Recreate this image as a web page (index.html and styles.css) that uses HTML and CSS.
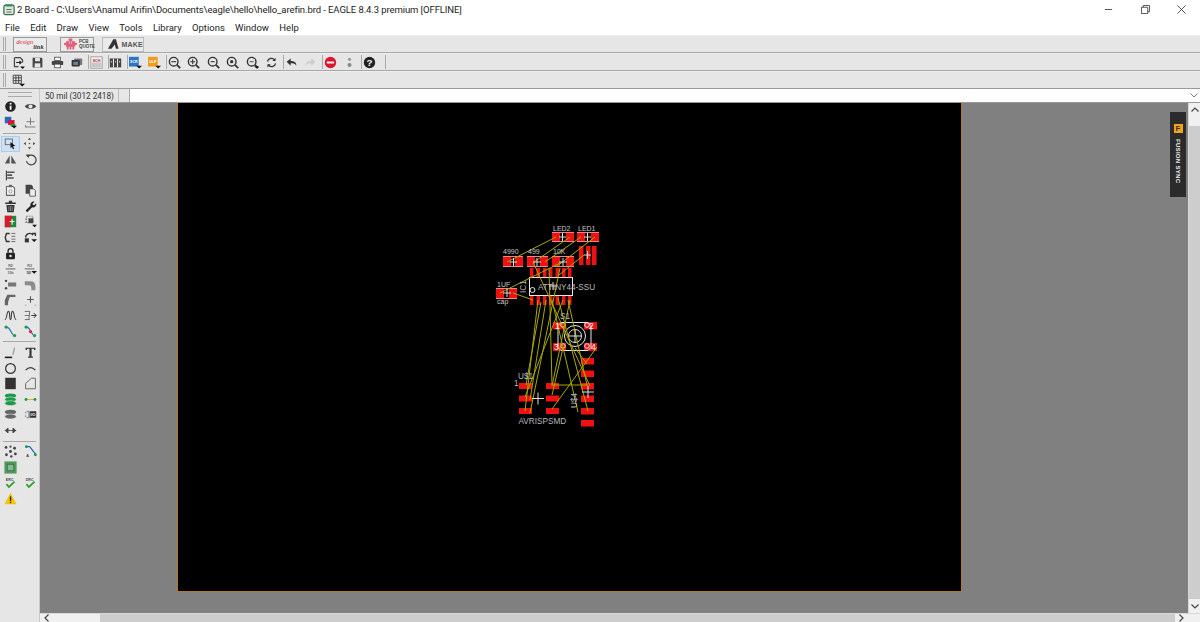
FILE: index.html
```html
<!DOCTYPE html>
<html lang="en">
<head>
<meta charset="utf-8">
<title>2 Board - EAGLE</title>
<link rel="stylesheet" href="styles.css">
</head>
<body>
<header class="titlebar">
  <svg class="app-icon" viewBox="0 0 14 14"><rect x="1" y="2" width="12" height="11" rx="2" fill="#d9e8d9" stroke="#3b6b4a" stroke-width="1.4"/><rect x="3" y="1" width="8" height="2.5" fill="#3b8a5a"/><path d="M4 7h6M4 10h6" stroke="#555" stroke-width="1"/></svg>
  <span class="title-text">2 Board - C:\Users\Anamul Arifin\Documents\eagle\hello\hello_arefin.brd - EAGLE 8.4.3 premium [OFFLINE]</span>
  <div class="win-controls">
    <svg class="win-btn" viewBox="0 0 10 10"><path d="M1 5h8" stroke="#444"/></svg>
    <svg class="win-btn" viewBox="0 0 10 10"><path d="M.5 2.5h7v7h-7zM2.5 2.5v-2h7v7h-2" fill="none" stroke="#444"/></svg>
    <svg class="win-btn" viewBox="0 0 10 10"><path d="M.5.5l9 9M9.5.5l-9 9" stroke="#444"/></svg>
  </div>
</header>
<nav class="menubar">
  <span>File</span><span>Edit</span><span>Draw</span><span>View</span><span>Tools</span><span>Library</span><span>Options</span><span>Window</span><span>Help</span>
</nav>
<div class="toolbar">
  <i class="grip"></i>
  <div class="web-btn btn-design"><span class="design-a">design</span><span class="design-b">link</span></div>
  <div class="web-btn btn-pcb">
    <svg class="pcb-logo" viewBox="0 0 14 12"><path d="M5 0h4v3h3v2h2v2h-2v2h-1v3H9V9H8v3H6V9H5v3H3V9H2V7H0V5h2V3h3z" fill="#e0607e"/><path d="M6 3v3M8 3v3" stroke="#f4c8d4" stroke-width=".8"/></svg>
    <span class="pcb-text">PCB<br>QUOTE</span>
  </div>
  <div class="web-btn btn-make">
    <svg class="make-logo" viewBox="0 0 12 11"><path d="M0 11L6 0h3l3 11H9L7.700 6 4 11z" fill="#333"/></svg>
    <span>MAKE</span>
  </div>
</div>
<div class="toolbar tb-icons">
  <i class="grip"></i>
  <svg class="ic s-a" viewBox="0 0 16 16"><path d="M3 2h7l3 3v3M3 2v11h5" fill="none" stroke="#444" stroke-width="1.500"/><path d="M5 8h6M9 6l2.500 2L9 10" fill="none" stroke="#222" stroke-width="1.300"/><path d="M10 13h6l-3 3z" fill="#111"/></svg>
  <svg class="ic" viewBox="0 0 16 16"><path d="M2 2h11l1 1v11H2z" fill="#444"/><rect x="5" y="2.500" width="6" height="4" fill="#e6e6e6"/><rect x="4.500" y="9" width="7" height="5" fill="#e6e6e6"/></svg>
  <svg class="ic" viewBox="0 0 16 16"><rect x="4.500" y="1.500" width="7" height="4" fill="#fff" stroke="#444"/><rect x="1" y="6" width="14" height="5" rx="1" fill="#444"/><rect x="4.500" y="10" width="7" height="4.500" fill="#fff" stroke="#444"/></svg>
  <svg class="ic" viewBox="0 0 16 16"><rect x="5" y="3" width="10" height="8" rx="1" fill="#777"/><rect x="2" y="5" width="10" height="8" rx="1" fill="#333"/><rect x="4" y="7" width="6" height="4" fill="#6a7f99"/></svg>
  <i class="tb-sep"></i>
  <svg class="ic" viewBox="0 0 16 16"><rect x="1" y="1" width="14" height="14" fill="#eee" stroke="#999"/><text x="8" y="7" class="ic-txt" fill="#c0202a">SCH</text><rect x="2" y="8" width="12" height="6" fill="#c8c8c8"/></svg>
  <i class="tb-sep"></i>
  <svg class="ic" viewBox="0 0 16 16"><rect x="1" y="3" width="14" height="11" fill="#444"/><path d="M5.500 3v11M10.500 3v11" stroke="#e6e6e6" stroke-width="1.300"/><path d="M3 6v2M8 6v2M13 6v2" stroke="#ddd"/></svg>
  <i class="tb-sep"></i>
  <svg class="ic" viewBox="0 0 16 16"><rect x="0" y="1" width="12" height="12" fill="#2a75c4"/><text x="6" y="9" class="ic-txt" fill="#fff">SCR</text><path d="M9 12h7l-3.500 3.500z" fill="#111"/></svg>
  <svg class="ic" viewBox="0 0 16 16"><rect x="0" y="1" width="12" height="12" fill="#f29c1f"/><text x="6" y="9" class="ic-txt" fill="#fff">ULP</text><path d="M9 12h7l-3.500 3.500z" fill="#111"/></svg>
  <i class="tb-sep"></i>
  <svg class="ic" viewBox="0 0 16 16"><use href="#zoom"/><path d="M4 7h6" stroke="#333" stroke-width="1.300"/></svg>
  <svg class="ic" viewBox="0 0 16 16"><use href="#zoom"/><path d="M4 7h6M7 4v6" stroke="#333" stroke-width="1.300"/></svg>
  <svg class="ic" viewBox="0 0 16 16"><use href="#zoom"/><path d="M4.500 7h5" stroke="#333" stroke-width="1.300"/></svg>
  <svg class="ic" viewBox="0 0 16 16"><use href="#zoom"/><circle cx="7" cy="7" r="2" fill="#333"/></svg>
  <svg class="ic" viewBox="0 0 16 16"><use href="#zoom"/><path d="M4.500 7h5" stroke="#333"/><path d="M10 12.500h6L13 15.500z" fill="#111"/></svg>
  <svg class="ic" viewBox="0 0 16 16"><path d="M3 7a5 5 0 0 1 9-2M13 9a5 5 0 0 1-9 2" fill="none" stroke="#333" stroke-width="1.500"/><path d="M13 2v4H9zM3 14v-4h4z" fill="#333"/></svg>
  <i class="tb-sep"></i>
  <svg class="ic" viewBox="0 0 16 16"><path d="M2 7l5-4v3c4 0 7 1 7 6-2-3-4-3-7-3v3z" fill="#333"/></svg>
  <svg class="ic" viewBox="0 0 16 16"><path d="M14 7L9 3v3C5 6 2 7 2 12c2-3 4-3 7-3v3z" fill="#ccc"/></svg>
  <i class="tb-sep"></i>
  <svg class="ic" viewBox="0 0 16 16"><circle cx="8" cy="8" r="7" fill="#e0132e"/><rect x="3.500" y="6.800" width="9" height="2.400" fill="#fff"/></svg>
  <svg class="ic" viewBox="0 0 16 16"><circle cx="8" cy="4" r="2" fill="#999"/><circle cx="8" cy="11" r="2.500" fill="#888"/></svg>
  <i class="tb-sep"></i>
  <svg class="ic" viewBox="0 0 16 16"><circle cx="8" cy="8" r="7" fill="#222"/><text x="8" y="12" class="ic-q" fill="#fff">?</text></svg>
  <i class="tb-sep end"></i>
</div>
<div class="toolbar tb-icons tb-last">
  <i class="grip"></i>
  <svg class="ic s-a" viewBox="0 0 16 16"><path d="M1.500 1.500h10v10h-10zM1.500 4.800h10M1.500 8.200h10M4.800 1.500v10M8.200 1.500v10" fill="none" stroke="#333"/><path d="M9 12h7l-3.500 3.500z" fill="#111"/></svg>
</div>
<div class="workspace">
  <aside class="tools">
    <i class="tools-grip"></i>
    <div class="tool-row"><svg class="tl" viewBox="0 0 16 16"><circle cx="8" cy="8" r="6.500" fill="#222"/><rect x="7" y="7" width="2.200" height="5" fill="#fff"/><rect x="7" y="3.600" width="2.200" height="2" fill="#fff"/></svg><svg class="tl" viewBox="0 0 16 16"><path d="M1 8c3-4 11-4 14 0-3 4-11 4-14 0z" fill="#444"/><circle cx="8" cy="8" r="2.500" fill="#e6e6e6"/></svg></div>
    <div class="tool-row"><svg class="tl" viewBox="0 0 16 16"><rect x="1" y="1" width="8" height="8" fill="#2a68c0"/><rect x="5" y="5" width="8" height="6" fill="#d9143a"/><rect x="8" y="10" width="6" height="3" fill="#1c9a4a"/><path d="M9 12h7l-3.500 3.500z" fill="#111"/></svg><svg class="tl" viewBox="0 0 16 16"><path d="M8 2v9M3 7h10M2 13.500h12" stroke="#666" fill="none"/><path d="M2 11v3" stroke="#666"/></svg></div>
    <i class="tools-sep"></i>
    <div class="tool-row"><div class="tool-active"><svg class="tl" viewBox="0 0 16 16"><rect x="1.500" y="2.500" width="9" height="7" fill="none" stroke="#555"/><path d="M8 6l6 5-3 .3 1.500 3-1.500.7-1.300-3L8 14z" fill="#111"/></svg></div><svg class="tl" viewBox="0 0 16 16"><path d="M8 1l2 2.500H6zM8 15l2-2.500H6zM1 8l2.500-2v4zM15 8l-2.500-2v4z" fill="#444"/><circle cx="8" cy="8" r="1" fill="#555"/></svg></div>
    <div class="tool-row"><svg class="tl" viewBox="0 0 16 16"><path d="M7 3v10L1 13zM9 3v10l6 0z" fill="#555"/></svg><svg class="tl" viewBox="0 0 16 16"><path d="M5 4a6 6 0 1 1-2 6" fill="none" stroke="#444" stroke-width="1.500"/><path d="M2 2l5-.5L5.500 6z" fill="#444"/></svg></div>
    <div class="tool-row"><svg class="tl" viewBox="0 0 16 16"><path d="M3 2v12" stroke="#444" stroke-width="1.500"/><path d="M4 4h9M4 7.500h6M4 11h8" stroke="#555" stroke-width="2"/></svg><span class="tl-empty"></span></div>
    <div class="tool-row"><svg class="tl" viewBox="0 0 16 16"><path d="M5 3h6l2 2v9H3V3z" fill="#eee" stroke="#666" stroke-width="1.300"/><rect x="6" y="1" width="4" height="3" fill="#666"/><circle cx="8" cy="9" r="2" fill="none" stroke="#999"/></svg><svg class="tl" viewBox="0 0 16 16"><path d="M2 1h7l2 2v9H2z" fill="#444"/><path d="M7 6h5l2 2v7H7z" fill="#eee" stroke="#444"/></svg></div>
    <div class="tool-row"><svg class="tl" viewBox="0 0 16 16"><path d="M1.500 3h13v2h-13zM6 1h4v2H6z" fill="#333"/><path d="M3 6h10l-1 9H4z" fill="#333"/><path d="M6 7.500v6M8 7.500v6M10 7.500v6" stroke="#bbb" stroke-width=".7"/></svg><svg class="tl" viewBox="0 0 16 16"><path d="M2 13l6-6a4 4 0 0 1 5-5l-2.500 2.500L11 6l1.500.5L15 4a4 4 0 0 1-5 5l-6 6z" fill="#222"/></svg></div>
    <div class="tool-row"><svg class="tl" viewBox="0 0 16 16"><rect x="1" y="1" width="14" height="14" fill="#1c8a3c"/><path d="M1 1h9v6H8v8H1z" fill="#d61c2a"/><path d="M7 8h6M10 5v7" stroke="#fff" stroke-width="1.300"/></svg><svg class="tl" viewBox="0 0 16 16"><rect x="3" y="1.500" width="8" height="8" fill="none" stroke="#777" stroke-dasharray="2 1"/><rect x="5.500" y="4" width="6" height="6" fill="#444"/><path d="M1 5h3M1 9h3" stroke="#777"/><path d="M10 12h6l-3 3z" fill="#111"/></svg></div>
    <div class="tool-row"><svg class="tl" viewBox="0 0 16 16"><path d="M7 3H3L1.500 8 3 13h4" fill="none" stroke="#333" stroke-width="1.700"/><path d="M9 3h5M9 6.500h5M9 10h5M9 13h5" stroke="#555"/></svg><svg class="tl" viewBox="0 0 16 16"><path d="M2 8a5 5 0 0 1 9-3M10 3h4v3" fill="none" stroke="#333" stroke-width="1.700"/><rect x="1" y="9" width="5" height="5" fill="#333"/><path d="M9 10h7l-3.500 3.500z" fill="#111"/></svg></div>
    <div class="tool-row"><svg class="tl" viewBox="0 0 16 16"><path d="M5 7V5a3 3 0 0 1 6 0v2" fill="none" stroke="#222" stroke-width="1.600"/><rect x="2.500" y="7" width="11" height="8" rx="1.500" fill="#222"/><circle cx="8" cy="11" r="1.500" fill="#e6e6e6"/></svg><span class="tl-empty"></span></div>
    <div class="tool-row"><svg class="tl" viewBox="0 0 16 16"><text x="8" y="6.500" class="ic-txt" fill="#666">R2</text><path d="M2 8.500h12" stroke="#444"/><text x="8" y="15" class="ic-txt" fill="#666">10k</text></svg><svg class="tl" viewBox="0 0 16 16"><text x="7" y="6.500" class="ic-txt" fill="#666">R2</text><path d="M1 8.500h12" stroke="#444"/><text x="6" y="15" class="ic-txt" fill="#333">50</text><path d="M9 11h7l-3.500 3.500z" fill="#111"/></svg></div>
    <div class="tool-row"><svg class="tl" viewBox="0 0 16 16"><circle cx="2.500" cy="3.500" r="1.500" fill="#444"/><circle cx="2.500" cy="12.500" r="1.500" fill="#444"/><rect x="5" y="5.500" width="10" height="5" fill="#777"/></svg><svg class="tl" viewBox="0 0 16 16"><path d="M1 4h7q6 0 6 6v5h-5v-3q0-3-3-3H1z" fill="#8c8c8c"/></svg></div>
    <div class="tool-row"><svg class="tl" viewBox="0 0 16 16"><path d="M1 15V9l3-7h10v3H7l-2 6v4z" fill="#666"/></svg><svg class="tl" viewBox="0 0 16 16"><path d="M8 4v8M4 8h8" stroke="#555" stroke-width="1.300"/><path d="M1 15h2M13 15h2" stroke="#999"/></svg></div>
    <div class="tool-row"><svg class="tl" viewBox="0 0 16 16"><path d="M1 13c3 0 2-10 4.500-10S6 13 8 13 8 3 10.500 3 12 13 15 13" fill="none" stroke="#444" stroke-width="1.400"/></svg><svg class="tl" viewBox="0 0 16 16"><path d="M1 3h6M1 8h5M1 13h6M7 3l-1 10" stroke="#555" fill="none"/><path d="M9 8h6M12 5l3 3-3 3" fill="none" stroke="#333" stroke-width="1.200"/></svg></div>
    <div class="tool-row"><svg class="tl" viewBox="0 0 16 16"><use href="#route"/></svg><svg class="tl" viewBox="0 0 16 16"><use href="#route"/><circle cx="8" cy="8" r="2" fill="#e8204a"/></svg></div>
    <i class="tools-sep"></i>
    <div class="tool-row"><svg class="tl" viewBox="0 0 16 16"><path d="M1 14h9" stroke="#222" stroke-width="2"/><path d="M13 2l-2 9" stroke="#999" stroke-width="1.500"/></svg><svg class="tl" viewBox="0 0 16 16"><path d="M2 2h12v3h-1.500L12 3.500H9.300V13H11v1.500H5V13h1.700V3.500H4L3.500 5H2z" fill="#333"/></svg></div>
    <div class="tool-row"><svg class="tl" viewBox="0 0 16 16"><circle cx="8" cy="8" r="6" fill="none" stroke="#333" stroke-width="1.500"/></svg><svg class="tl" viewBox="0 0 16 16"><path d="M2 10q6-6 12 0" fill="none" stroke="#333" stroke-width="1.500"/></svg></div>
    <div class="tool-row"><svg class="tl" viewBox="0 0 16 16"><rect x="1.500" y="1" width="13" height="14" fill="#333"/></svg><svg class="tl" viewBox="0 0 16 16"><path d="M9 1.500h5v13H2V8z" fill="none" stroke="#666" stroke-width="1.200"/></svg></div>
    <div class="tool-row"><svg class="tl" viewBox="0 0 16 16"><ellipse cx="8" cy="3.500" rx="7" ry="3" fill="#1c9a4a"/><ellipse cx="8" cy="8" rx="7" ry="3" fill="#1c9a4a" stroke="#e6e6e6" stroke-width=".7"/><ellipse cx="8" cy="12.500" rx="7" ry="3" fill="#1c9a4a" stroke="#e6e6e6" stroke-width=".7"/></svg><svg class="tl" viewBox="0 0 16 16"><path d="M2 8h12" stroke="#e2b020" stroke-width="1.200"/><circle cx="2.500" cy="8" r="1.800" fill="#1c9a4a"/><circle cx="13.500" cy="8" r="1.800" fill="#1c9a4a"/></svg></div>
    <div class="tool-row"><svg class="tl" viewBox="0 0 16 16"><ellipse cx="8" cy="5" rx="7" ry="3" fill="#666"/><ellipse cx="8" cy="10.500" rx="7" ry="3" fill="#666" stroke="#e6e6e6" stroke-width=".7"/></svg><svg class="tl" viewBox="0 0 16 16"><path d="M3 4h3v8H3M1 6h2M1 10h2" fill="none" stroke="#666"/><rect x="7" y="4" width="8" height="8" fill="#333"/><text x="11" y="10" class="ic-txt" fill="#fff">I/O</text></svg></div>
    <div class="tool-row"><svg class="tl" viewBox="0 0 16 16"><path d="M1 8h14M5 5L1.500 8 5 11zM11 5l3.500 3-3.500 3z" fill="#444" stroke="#444"/></svg><span class="tl-empty"></span></div>
    <i class="tools-sep"></i>
    <div class="tool-row"><svg class="tl" viewBox="0 0 16 16"><g fill="#444"><circle cx="2.500" cy="3" r="1.700"/><circle cx="8" cy="2" r="1.300"/><circle cx="13" cy="4" r="1.700"/><circle cx="8" cy="8" r="1.800"/><circle cx="3" cy="12" r="1.700"/><circle cx="9" cy="14" r="1.500"/><circle cx="14" cy="11" r="1.700"/></g></svg><svg class="tl" viewBox="0 0 16 16"><path d="M3 2h4l7 9" fill="none" stroke="#2a68c0" stroke-width="1.600"/><circle cx="3" cy="2" r="1.800" fill="#1c9a4a"/><circle cx="14" cy="12" r="1.800" fill="#1c9a4a"/><text x="4.500" y="14.500" class="ic-txt" fill="#333">A</text></svg></div>
    <div class="tool-row"><svg class="tl" viewBox="0 0 16 16"><rect x=".5" y=".5" width="15" height="15" fill="#4f9a5f"/><rect x="4" y="4" width="8" height="8" fill="#86b98f" stroke="#2f6f40"/></svg><span class="tl-empty"></span></div>
    <div class="tool-row"><svg class="tl" viewBox="0 0 16 16"><text x="7" y="6" class="ic-txt" fill="#444">ERC</text><path d="M3 10l3 3.500L13 7" fill="none" stroke="#2aa02a" stroke-width="2"/></svg><svg class="tl" viewBox="0 0 16 16"><text x="7" y="6" class="ic-txt" fill="#444">DRC</text><path d="M3 10l3 3.500L13 7" fill="none" stroke="#2aa02a" stroke-width="2"/></svg></div>
    <div class="tool-row"><svg class="tl" viewBox="0 0 16 16"><path d="M8 1l7.500 14H.5z" fill="#f5c400"/><rect x="7.200" y="5.500" width="1.700" height="5.500" fill="#222"/><rect x="7.200" y="12" width="1.700" height="1.700" fill="#222"/></svg><span class="tl-empty"></span></div>
  </aside>
  <div class="right-col">
    <div class="coord-row">
      <span class="coord">50 mil (3012 2418)</span>
      <span class="coord-gap"></span>
      <div class="cmd-input"><svg class="chev" viewBox="0 0 8 5"><path d="M.5.500L4 4 7.500.500" fill="none" stroke="#777"/></svg></div>
    </div>
    <div class="view-row">
      <main class="canvas">
        <div class="board">
          <svg class="pcb" viewBox="178 103 783 488">
            <g class="pads">
              <rect x="552" y="232" width="8" height="10"/><rect x="566" y="232" width="8" height="10"/>
              <rect x="577" y="232" width="8" height="10"/><rect x="591" y="232" width="8" height="10"/>
              <rect x="503" y="256" width="8" height="11"/><rect x="515" y="256" width="8" height="11"/>
              <rect x="527" y="256" width="8" height="11"/><rect x="540" y="256" width="8" height="11"/>
              <rect x="552" y="256" width="8" height="11"/><rect x="566" y="256" width="8" height="11"/>
              <rect x="496" y="288" width="8" height="11"/><rect x="509" y="288" width="8" height="11"/>
              <rect x="579" y="246" width="4.500" height="19"/><rect x="586" y="246" width="4.500" height="19"/><rect x="592" y="246" width="4.500" height="19"/>
              <rect x="530" y="268" width="3.500" height="9"/><rect x="536.500" y="268" width="3.500" height="9"/><rect x="543" y="268" width="3.500" height="9"/><rect x="549" y="268" width="3.500" height="9"/><rect x="555.500" y="268" width="3.500" height="9"/><rect x="562" y="268" width="3.500" height="9"/><rect x="568" y="268" width="3.500" height="9"/>
              <rect x="530" y="295" width="3.500" height="10"/><rect x="536.500" y="295" width="3.500" height="10"/><rect x="543" y="295" width="3.500" height="10"/><rect x="549" y="295" width="3.500" height="10"/><rect x="555.500" y="295" width="3.500" height="10"/><rect x="562" y="295" width="3.500" height="10"/><rect x="568" y="295" width="3.500" height="10"/>
              <rect x="553" y="322" width="13" height="7.500"/><rect x="584" y="322" width="13" height="7.500"/><rect x="553" y="343" width="13" height="8"/><rect x="584" y="343" width="13" height="8"/>
              <rect x="519" y="383" width="13" height="6"/><rect x="519" y="395.500" width="13" height="6"/><rect x="519" y="408" width="13" height="6"/>
              <rect x="546" y="383" width="13" height="6"/><rect x="546" y="395.500" width="13" height="6"/><rect x="546" y="408" width="13" height="6"/>
              <rect x="581" y="358" width="13" height="6.500"/><rect x="581" y="370.500" width="13" height="6.500"/><rect x="581" y="383" width="13" height="6.500"/><rect x="581" y="395.500" width="13" height="6.500"/><rect x="581" y="408" width="13" height="6.500"/><rect x="581" y="420" width="13" height="6.500"/>
            </g>
            <g class="outlines">
              <path class="soft" d="M552 232.500h22M552 241.500h22M577 232.500h22M577 241.500h22M503 256.500h20M503 266.500h20M527 256.500h21M527 266.500h21M552 256.500h22M552 266.500h22M496 288.500h21M496 298.500h21"/>
              <rect x="529.500" y="277.500" width="43" height="18"/>
              <circle cx="532.500" cy="290" r="2.500"/>
              <path d="M561 322.500h27l3 3v22l-3 3h-27l-3-3v-22z"/>
              <circle cx="575" cy="336" r="10.500"/><circle cx="575" cy="336" r="6.500"/>
              <circle cx="563" cy="325" r="2.300"/><circle cx="587" cy="325" r="2.300"/><circle cx="563" cy="346" r="2.300"/><circle cx="587" cy="346" r="2.300"/>
            </g>
            <g class="air">
              <path d="M556 237L507 262M570 237L534 262M581 237L545 262M595 237L556 267M584 255L559 275M500 293L562 262M513 293L533 300"/>
              <path d="M538 300L525 411M541 302L526 385M546 300L530 400M552 300L578 412M558 298L588 411M563 300L525 397M570 300L552 386M549 268L552 385M560 268L530 413M568 300L587 385M533 262L590 386M553 385L588 385M552 409L597 347M587 364L575 348M563 348L552 395"/>
            </g>
            <path class="cross" d="M510 262h7M513.500 258v8M533 262h8M537 258v8M559 262h8M563 258v8M559 237h7M562.500 233v8M584 237h7M587.500 233v8M503 293h8M507 289v8M584 255h7M587.500 251v8M569 336h12M575 330v12M532 398.500h12M538 392.500v12M582 392h12M588 386v12M549 286h8M553 282v8"/>
            <g class="lbl">
              <text x="553" y="231">LED2</text><text x="578" y="231">LED1</text>
              <text x="503" y="254">4990</text><text x="528" y="254">499</text><text x="553" y="254">10K</text>
              <text x="497" y="287">1UF</text><text x="497" y="304">cap</text>
            </g>
            <g class="lbl-l">
              <text x="538" y="290">ATTINY44-SSU</text>
              <text x="560" y="319">S1</text>
              <text x="518" y="379">U$1</text><text x="514" y="386">1</text>
              <text x="518.500" y="424">AVRISPSMD</text>
              <text transform="translate(526 293) rotate(-90)">IC1</text>
              <text transform="translate(577 408) rotate(-90)">U$4</text>
            </g>
            <g class="lbl-p">
              <text x="555" y="329">1</text><text x="589" y="329">2</text><text x="554" y="350">3</text><text x="591" y="350">4</text>
            </g>
          </svg>
        </div>
        <div class="fusion">
          <span class="fusion-f">F</span>
          <span class="fusion-text">FUSION SYNC</span>
        </div>
      </main>
      <div class="vscroll">
        <div class="v-btn v-up"><svg class="sc" viewBox="0 0 8 5"><path d="M.5 4.500L4 1l3.500 3.500" fill="none" stroke="#444" stroke-width="1.200"/></svg></div>
        <div class="v-btn"><svg class="sc" viewBox="0 0 8 5"><path d="M.5.500L4 4l3.500-3.500" fill="none" stroke="#444" stroke-width="1.200"/></svg></div>
      </div>
    </div>
    <div class="hscroll">
      <div class="h-btn h-left"><svg class="sc-h" viewBox="0 0 5 8"><path d="M4.500.5L1 4l3.500 3.500" fill="none" stroke="#444" stroke-width="1.200"/></svg></div>
      <div class="h-btn h-right"><svg class="sc-h" viewBox="0 0 5 8"><path d="M.5.5L4 4 .5 7.500" fill="none" stroke="#444" stroke-width="1.200"/></svg></div>
      <div class="h-corner"></div>
    </div>
  </div>
</div>
<svg class="defs" width="0" height="0">
  <defs>
    <g id="zoom"><circle cx="7" cy="7" r="5.300" fill="none" stroke="#333" stroke-width="1.700"/><path d="M11 11l4 4" stroke="#333" stroke-width="2.200"/></g>
    <g id="route"><path d="M2 2l4 2 5 8" fill="none" stroke="#2a68c0" stroke-width="1.500"/><circle cx="2.500" cy="2.500" r="2" fill="#1c9a4a"/><circle cx="13" cy="13" r="2" fill="#1c9a4a"/></g>
  </defs>
</svg>
</body>
</html>
```
FILE: styles.css
```css
* { box-sizing: border-box; }
html, body { margin: 0; padding: 0; }
body {
  width: 1200px; height: 622px; overflow: hidden; background: #fff;
  font-family: Roboto, "Liberation Sans", sans-serif;
  color: #222; display: flex; flex-direction: column; position: relative;
}
.defs { position: absolute; }
.titlebar { height: 19px; display: flex; align-items: center; padding-left: 3px; flex: none; }
.app-icon { width: 12px; height: 13px; margin-right: 2px; }
.title-text { font-size: 9.500px; letter-spacing: -.09px; color: #222; white-space: nowrap; }
.win-controls { margin-left: auto; display: flex; gap: 27.500px; margin-right: 14px; }
.win-btn { width: 9px; height: 9px; }
.menubar { height: 16px; display: flex; align-items: center; padding-left: 5px; gap: 10.300px; font-size: 9.500px; flex: none; }
.toolbar {
  height: 18px; flex: none; background: #e6e6e6; border-bottom: 1px solid #a8a8a8;
  display: flex; align-items: center; padding-left: 3px; border-top: 1px solid #eee;
}
.grip { width: 3px; height: 14px; border-left: 1px solid #aaa; border-right: 1px solid #aaa; flex: none; }
.web-btn { height: 15px; background: #eaeaea; border: 1px solid #bbb; display: flex; align-items: center; flex: none; position: relative; }
.btn-design { width: 34px; margin-left: 7px; border-color: #999; justify-content: center; gap: 0; }
.design-a { color: #d5304a; font: italic 6.500px "Liberation Serif", serif; margin-top: -5px; }
.design-b { color: #333; font: italic bold 6.500px "Liberation Serif", serif; margin-top: 5px; }
.btn-pcb { width: 34px; margin-left: 13px; border-color: #999; padding-left: 3px; gap: 2px; }
.pcb-logo { width: 13px; height: 12px; flex: none; }
.pcb-text { font: bold 4.500px/5px "Liberation Sans", sans-serif; color: #444; }
.btn-make { width: 42px; margin-left: 8px; padding-left: 5px; gap: 3px; font: bold 7px "Liberation Sans", sans-serif; color: #555; letter-spacing: .2px; }
.make-logo { width: 11px; height: 10px; }
.ic { width: 13px; height: 13px; margin-right: 6.500px; flex: none; }
.s-a { margin-left: 5.500px; }
.ic-txt { font: bold 4.500px "Liberation Sans", sans-serif; text-anchor: middle; }
.ic-q { font: bold 12px "Liberation Sans", sans-serif; text-anchor: middle; }
.tb-sep { width: 1px; height: 14px; background: #aaa; margin: 0 .5px 0 -1.500px; flex: none; }
.tb-sep.end { margin-left: 3px; }
.tb-last { border-bottom: 1px solid #999; }
.workspace { flex: 1; display: flex; min-height: 0; }
.tools { width: 40px; flex: none; background: #e6e6e6; border-right: 1px solid #c8c8c8; padding-top: 3px; display: flex; flex-direction: column; align-items: stretch; }
.tools-grip { height: 5px; margin: 0 7px 2.200px 8px; border-top: 1px solid #aaa; border-bottom: 1px solid #aaa; flex: none; }
.tool-row { height: 15.600px; display: flex; flex: none; align-items: center; }
.tl, .tl-empty { width: 13px; height: 13px; margin: 0 3.500px; flex: none; }
.tool-active { width: 19px; height: 16px; margin-left: 1px; margin-right: 0; background: #cfe2f5; border: 1px solid #a9cdee; display: flex; align-items: center; justify-content: center; flex: none; }
.tool-active .tl { margin: 0; }
.tool-active + .tl { margin-left: 3px; }
.tools-sep { height: 1px; background: #a8a8a8; margin: 2.400px 3px; flex: none; }
.right-col { flex: 1; display: flex; flex-direction: column; min-width: 0; }
.coord-row { height: 14px; flex: none; display: flex; background: #e6e6e6; border-bottom: 1px solid #999; }
.coord { width: 79px; font-size: 8.200px; line-height: 14px; color: #333; padding-left: 5px; border-right: 1px solid #bbb; white-space: nowrap; }
.coord-gap { width: 10px; flex: none; }
.cmd-input { flex: 1; background: #fff; border-left: 1px solid #aaa; display: flex; align-items: center; justify-content: flex-end; padding-right: 2px; }
.chev { width: 8px; height: 5px; }
.view-row { flex: 1; display: flex; min-height: 0; }
.canvas { flex: 1; background: #808080; position: relative; padding-left: 137px; min-width: 0; }
.board { width: 785px; height: 489px; background: #000; border: solid #b87a20; border-width: 0 1px 1px 1px; }
.pcb { width: 783px; height: 488px; display: block; }
.pads rect { fill: #ee1111; }
.outlines { fill: none; stroke: #e8e8e8; stroke-width: 1; }
.outlines .soft { stroke: #e88; }
.air { fill: none; stroke: #a8a800; stroke-width: 1; }
.cross { fill: none; stroke: #e0e0e0; stroke-width: 1; }
.lbl { font: 7px "Liberation Sans", sans-serif; fill: #c8c8c8; }
.lbl-l { font: 8.200px "Liberation Sans", sans-serif; fill: #b8b8b8; }
.lbl-p { font: 8.500px "Liberation Sans", sans-serif; fill: #fff; }
.fusion { position: absolute; left: 1130px; top: 9px; width: 16px; height: 85px; background: #2b2b2b; display: flex; flex-direction: column; align-items: center; padding-top: 12px; gap: 6px; }
.fusion-f { width: 9px; height: 9px; background: #f5a31a; color: #333; font: bold 8px/9px "Liberation Sans", sans-serif; text-align: center; flex: none; }
.fusion-text { writing-mode: vertical-rl; color: #eee; font: bold 6px "Liberation Sans", sans-serif; letter-spacing: .3px; white-space: nowrap; }
.vscroll { width: 12px; flex: none; background: #cdcdcd; display: flex; flex-direction: column; justify-content: space-between; border-left: 1px solid #d8d8d8; }
.v-btn { height: 14px; background: #f0f0f0; display: flex; align-items: center; justify-content: center; }
.v-up { height: 23px; align-items: flex-start; padding-top: 4px; }
.sc { width: 8px; height: 5px; }
.sc-h { width: 5px; height: 8px; }
.hscroll { height: 9px; flex: none; background: #cdcdcd; display: flex; border-top: 1px solid #d8d8d8; }
.h-btn { background: #f0f0f0; display: flex; align-items: center; padding-left: 4px; }
.h-left { width: 60px; }
.h-right { width: 13px; margin-left: auto; }
.h-corner { width: 12px; background: #f0f0f0; }
```
